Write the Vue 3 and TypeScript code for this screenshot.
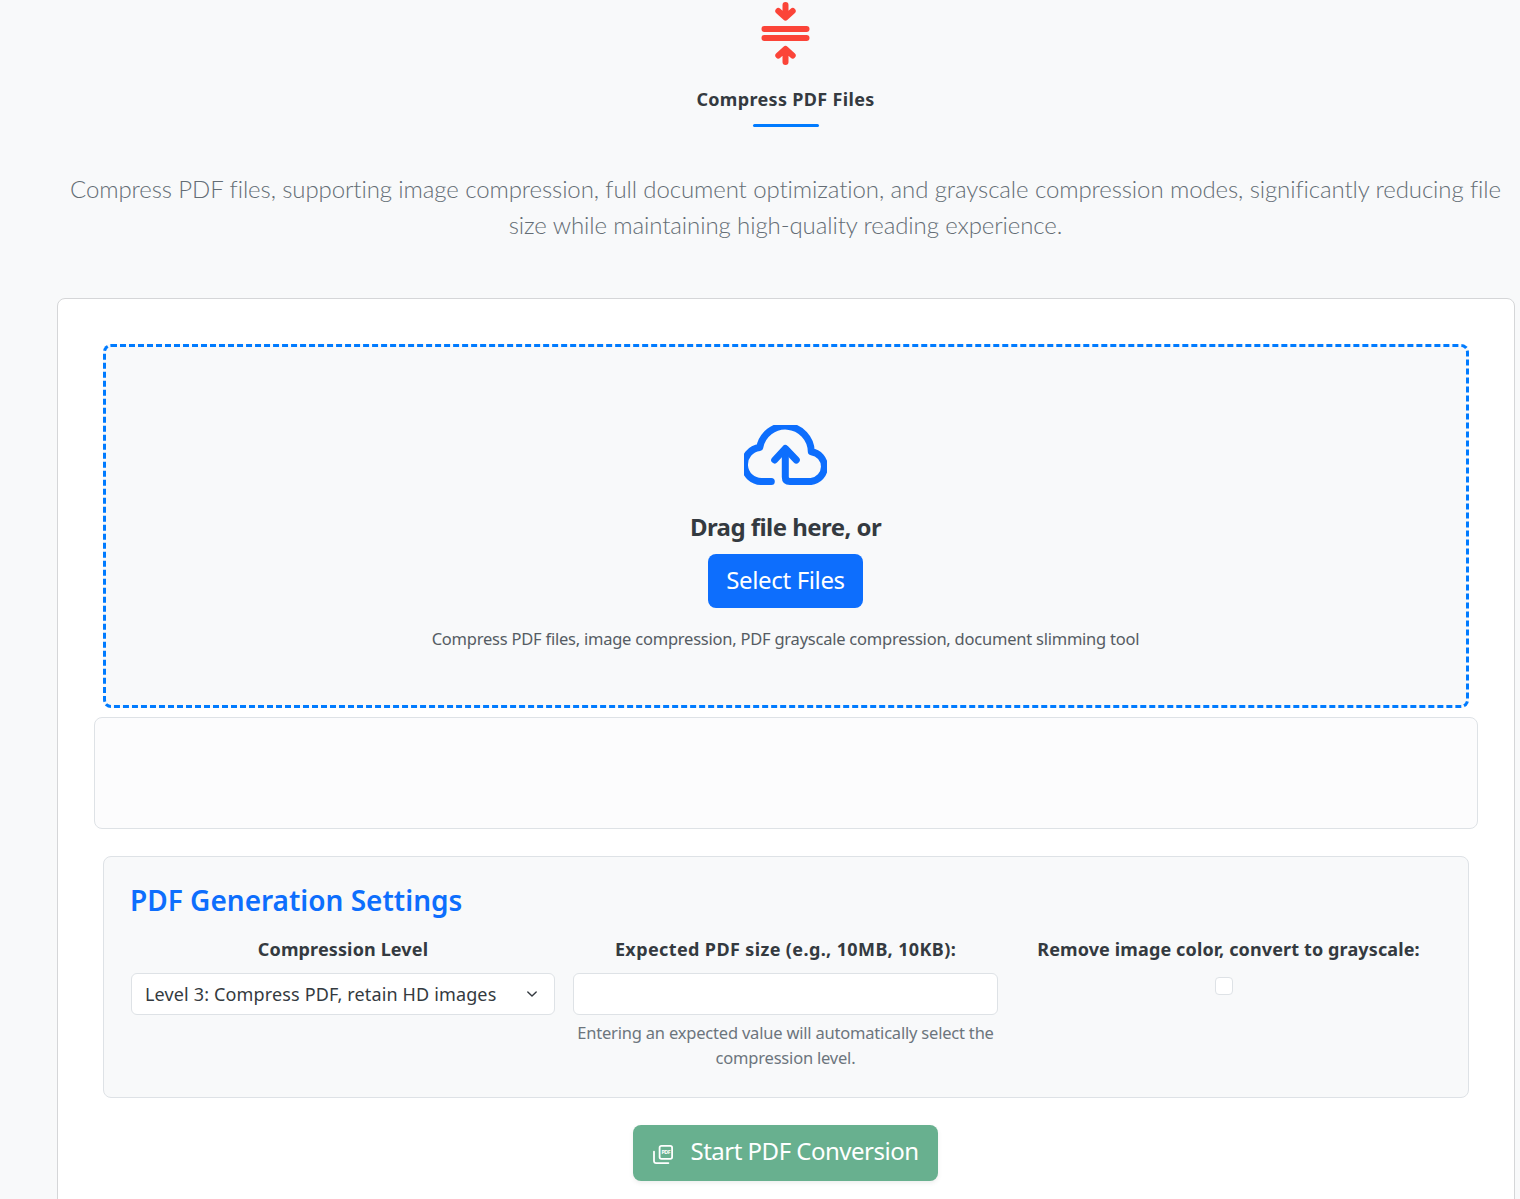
<script setup lang="ts">
const levels: string[] = ['Level 3: Compress PDF, retain HD images']
</script>

<template>
  <div class="page">
    <header class="head">
      <svg class="compress" width="49" height="66" viewBox="0 0 49 66" fill="none" stroke="#fb4438" stroke-width="6" stroke-linecap="round" stroke-linejoin="round">
        <path d="M24.5 5V17M17.3 11L24.5 17.5L31.7 11" />
        <path d="M3.5 29H45.5M3.5 38H45.5" />
        <path d="M24.5 62V50M17.3 55.5L24.5 49L31.7 55.5" />
      </svg>
      <h1 class="title">Compress PDF Files</h1>
      <div class="underline"></div>
    </header>
    <p class="lead">Compress PDF files, supporting image compression, full document optimization, and grayscale compression modes, significantly reducing file size while maintaining high-quality reading experience.</p>

    <main class="card">
      <section class="drop">
        <svg class="cloud" width="83" height="60" viewBox="0 0 83 60" fill="none" stroke="#0d6efd" stroke-width="7" stroke-linecap="round" stroke-linejoin="round">
          <path d="M27.3 56.5H18A17 17 0 0 1 15.7 22.6A26 26 0 0 1 67.3 26.7A15 15 0 0 1 67 56.5H46Q41.3 56.5 41.3 52V27" />
          <path d="M30.7 35L41.3 23.5L52.3 35" />
        </svg>
        <div class="drag">Drag file here, or</div>
        <button class="select" type="button">Select Files</button>
        <p class="hint">Compress PDF files, image compression, PDF grayscale compression, document slimming tool</p>
      </section>

      <div class="list"></div>

      <section class="settings">
        <h2 class="settings-title">PDF Generation Settings</h2>
        <div class="cols">
          <div class="col">
            <label class="label">Compression Level</label>
            <div class="select-box">
              <span>{{ levels[0] }}</span>
              <svg width="16" height="16" viewBox="0 0 16 16" fill="none" stroke="#343a40" stroke-width="2" stroke-linecap="round" stroke-linejoin="round"><path d="M2 5l6 6 6-6" transform="translate(2.4 2.4) scale(.7)" /></svg>
            </div>
          </div>
          <div class="col">
            <label class="label label-wide">Expected PDF size (e.g., 10MB, 10KB):</label>
            <input class="input" type="text" />
            <div class="help">Entering an expected value will automatically select the compression level.</div>
          </div>
          <div class="col">
            <label class="label">Remove image color, convert to grayscale:</label>
            <span class="check"></span>
          </div>
        </div>
      </section>

      <div class="actions">
        <button class="start" type="button">
          <svg class="start-icon" width="20" height="19" viewBox="0 0 20 19" fill="none" stroke="#fff" stroke-width="1.8">
            <rect x="6.6" y="0.9" width="12.5" height="13" rx="1.8" />
            <path d="M1 6.6V16A2.2 2.2 0 0 0 3.2 18.1H15.4" stroke-linecap="round" />
            <text x="12.9" y="9.4" text-anchor="middle" font-size="5.4" font-weight="700" fill="#fff" stroke="none" font-family="Noto Sans, sans-serif">PDF</text>
          </svg>
          <span class="start-label">Start PDF Conversion</span>
        </button>
      </div>
    </main>
  </div>
</template>

<style>
html, body { margin: 0; background: #f8f9fa; overflow: hidden; }
</style>

<style scoped>
.page {
  box-sizing: border-box;
  height: 1199px;
  overflow: hidden;
  padding: 0 5px 0 57px;
  font-family: "Noto Sans", "Open Sans", sans-serif;
  color: #343a40;
}
.head { display: flex; flex-direction: column; align-items: center; margin-right: 1px; }
.compress { display: block; }
.title { margin: 21px 0 0; font-size: 18px; line-height: 25px; font-weight: 700; letter-spacing: 0.33px; }
.underline { width: 66px; height: 3px; margin-top: 12px; border-radius: 2px; background: #007bff; }
.lead {
  margin: 44px 0 0; padding: 0;
  width: 1457px;
  height: 72px;
  text-align: center;
  font-family: Lato, "Noto Sans", sans-serif;
  font-size: 24px; line-height: 36px; font-weight: 300; color: #646d75;
  letter-spacing: -0.1px;
}
.card {
  box-sizing: border-box;
  margin-top: 55px;
  height: 960px;
  padding: 45px;
  background: #fff;
  border: 1px solid #d5d6d8;
  border-radius: 8px 8px 0 0;
}
.drop {
  box-sizing: border-box;
  height: 364px;
  padding: 78px 1px 0 0;
  display: flex; flex-direction: column; align-items: center;
  background: #f8f9fa;
  border: 3px dashed #007bff;
  border-radius: 8px;
}
.cloud { display: block; }
.drag { margin-top: 24px; font-size: 24px; line-height: 36px; font-weight: 700; letter-spacing: -0.55px; }
.select {
  margin-top: 9px; width: 155px; height: 54px; padding: 0 0 2px;
  background: #0d6efd; color: #fff; border: 0; border-radius: 8px;
  font: 400 24px/36px "Noto Sans", sans-serif; letter-spacing: -0.35px;
}
.hint { margin: 19px 0 0; font-size: 16.5px; line-height: 24px; color: #555c63; letter-spacing: -0.23px; }
.list {
  box-sizing: border-box;
  height: 112px;
  margin: 9px -9px 27px;
  background: #fcfcfd;
  border: 1px solid #dee2e6;
  border-radius: 8px;
}
.settings {
  box-sizing: border-box;
  height: 242px;
  padding: 26px 27px;
  background: #f8f9fa;
  border: 1px solid #dee2e6;
  border-radius: 8px;
}
.settings-title { margin: 0 0 0 -1px; font-size: 28px; line-height: 34px; font-weight: 600; color: #0d6efd; }
.cols { display: grid; grid-template-columns: 424px 425px 1fr; column-gap: 18px; margin-top: 19px; }
.col { display: flex; flex-direction: column; align-items: center; text-align: center; min-width: 0; }
.label { font-size: 18px; line-height: 27px; font-weight: 700; letter-spacing: 0.13px; margin-bottom: 10px; white-space: nowrap; }
.label-wide { letter-spacing: 0.38px; }
.select-box {
  box-sizing: border-box; width: 100%; height: 42px;
  display: flex; align-items: center; justify-content: space-between;
  padding: 0 14px 0 13px;
  background: #fff; border: 1px solid #dee2e6; border-radius: 6px;
  font-size: 18px; letter-spacing: 0.15px; color: #343a40;
}
.input {
  box-sizing: border-box; width: 100%; height: 42px; margin: 0;
  background: #fff; border: 1px solid #dee2e6; border-radius: 6px; outline: 0;
}
.help { margin-top: 5px; font-size: 16.5px; line-height: 25px; color: #6c757d; letter-spacing: -0.2px; }
.check {
  box-sizing: border-box; width: 18px; height: 18px; margin: 4px 9px 0 0;
  background: #fff; border: 1px solid #dee2e6; border-radius: 4px;
}
.actions { display: flex; justify-content: center; margin-top: 27px; padding-right: 1px; }
.start {
  display: flex; align-items: center; justify-content: center; gap: 17px;
  width: 305px; height: 56px; padding: 0;
  background: #198754; color: #fff; opacity: .65;
  border: 0; border-radius: 8px;
  box-shadow: 0 2px 4px rgba(0,0,0,.1);
  font: 400 24px/36px "Noto Sans", sans-serif; letter-spacing: -0.5px;
}
.start-icon { margin: 2px 0 0 1px; }
.start-label { padding-bottom: 4px; }
</style>
